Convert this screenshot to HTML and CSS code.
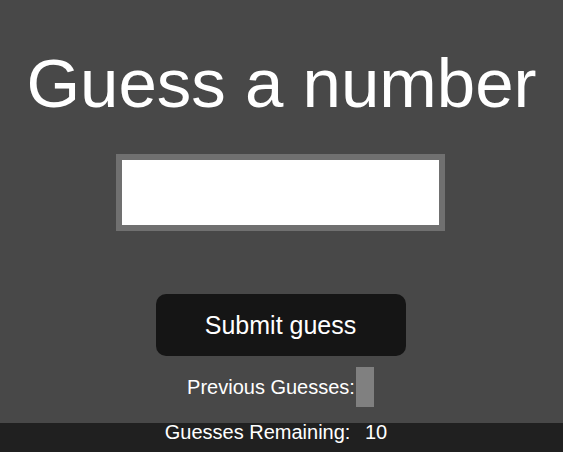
FILE: index.html
```html
<!DOCTYPE html>
<html lang="en">
<head>
<meta charset="utf-8">
<title>Guess a number</title>
<link rel="stylesheet" href="styles.css">
</head>
<body>
<main class="game">
  <h1 class="title">Guess a number</h1>
  <input class="guess-input" type="text" aria-label="Your guess">
  <button class="submit" type="button">Submit guess</button>
  <div class="row previous">Previous Guesses:<span class="prev"></span></div>
  <div class="row remaining">Guesses Remaining: <span class="count">10</span></div>
</main>
</body>
</html>
```
FILE: styles.css
```css
html, body {
  margin: 0;
  padding: 0;
  background: #202020;
  font-family: "Liberation Sans", Arial, sans-serif;
  color: #ffffff;
}
.game {
  min-height: 100vh;
  background: linear-gradient(to bottom, #484848 423px, #202020 423px);
  display: flex;
  flex-direction: column;
  align-items: center;
  padding-top: 44px;
  padding-right: 2px;
  box-sizing: border-box;
}
.title {
  margin: 0 0 0 2px;
  font-size: 69px;
  font-weight: normal;
  line-height: 79px;
}
.guess-input {
  margin-top: 31px;
  width: 329px;
  height: 77px;
  box-sizing: border-box;
  border: 6px solid #707070;
  background: #ffffff;
  outline: none;
  padding: 0 8px;
  font-size: 24px;
}
.submit {
  margin-top: 63px;
  width: 250px;
  height: 62px;
  border: none;
  border-radius: 10px;
  background: #151515;
  color: #ffffff;
  font-family: "Liberation Sans", Arial, sans-serif;
  font-size: 25px;
}
.row {
  font-size: 20px;
  line-height: 23px;
  display: flex;
  align-items: center;
  white-space: pre;
}
.previous {
  margin-top: 11px;
}
.prev {
  display: inline-block;
  width: 18px;
  height: 40px;
  background: #808080;
  margin-left: 1px;
}
.remaining {
  margin-top: 14px;
}
.count {
  padding: 0 9px;
}
```
